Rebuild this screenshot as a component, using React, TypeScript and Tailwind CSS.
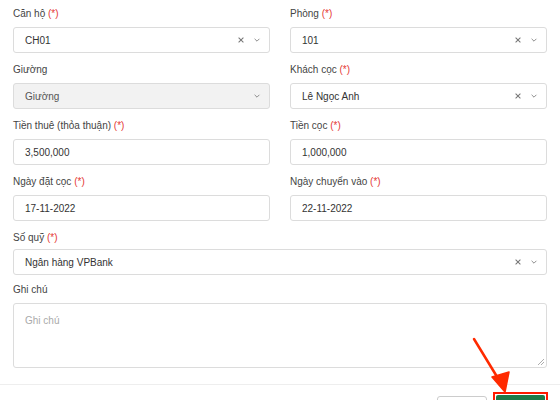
import React from 'react';

// ô chọn có nút xóa và mũi tên
function SelectBox({ value, clearable = true, disabled = false }: { value: string; clearable?: boolean; disabled?: boolean }) {
  return (
    <div
      className={`flex h-[26px] items-center rounded-[3px] border border-[#dcdcdc] pl-[11px] pr-[8px] ${
        disabled ? 'bg-[#f2f2f2] text-[#555]' : 'bg-white text-[#333]'
      }`}
    >
      <span className="flex-1">{value}</span>
      {clearable && (
        <svg className="mr-[8px] h-[8px] w-[8px] text-[#777]" viewBox="0 0 10 10" fill="none" stroke="currentColor" strokeWidth="1.3">
          <path d="M2 2l6 6M8 2l-6 6" />
        </svg>
      )}
      <svg className="h-[8px] w-[8px] text-[#888]" viewBox="0 0 10 10" fill="none" stroke="currentColor" strokeWidth="1.2">
        <path d="M2 3.5l3 3 3-3" />
      </svg>
    </div>
  );
}

function TextBox({ value }: { value: string }) {
  return (
    <div className="flex h-[26px] items-center rounded-[3px] border border-[#dcdcdc] bg-white pl-[11px] text-[#333]">
      {value}
    </div>
  );
}

function Field({ label, required, children, tight }: { label: string; required?: boolean; children: React.ReactNode; tight?: boolean }) {
  return (
    <div className={tight ? 'mb-[7px]' : 'mb-[9px]'}>
      <div className={`${tight ? 'mb-[3px]' : 'mb-[5px]'} h-[16px] leading-[16px] text-[#444]`}>
        {label} {required && <span className="text-[#e53935]">(*)</span>}
      </div>
      {children}
    </div>
  );
}

export default function App() {
  return (
    <div className="relative h-[400px] w-[560px] overflow-hidden bg-white text-[10px]" style={{ fontFamily: '"Liberation Sans", Arial, sans-serif' }}>
      <div className="px-[13px] pt-[6px]">
        <div className="grid grid-cols-2 gap-x-[20px]">
          <Field label="Căn hộ" required>
            <SelectBox value="CH01" />
          </Field>
          <Field label="Phòng" required>
            <SelectBox value="101" />
          </Field>
          <Field label="Giường">
            <SelectBox value="Giường" clearable={false} disabled />
          </Field>
          <Field label="Khách cọc" required>
            <SelectBox value="Lê Ngọc Anh" />
          </Field>
          <Field label="Tiền thuê (thỏa thuận)" required>
            <TextBox value="3,500,000" />
          </Field>
          <Field label="Tiền cọc" required>
            <TextBox value="1,000,000" />
          </Field>
          <Field label="Ngày đặt cọc" required>
            <TextBox value="17-11-2022" />
          </Field>
          <Field label="Ngày chuyển vào" required>
            <TextBox value="22-11-2022" />
          </Field>
        </div>
        <Field label="Số quỹ" required tight>
          <SelectBox value="Ngân hàng VPBank" />
        </Field>
        <div>
          <div className="mb-[5px] h-[16px] leading-[16px] text-[#444]">Ghi chú</div>
          <div className="relative h-[65px] rounded-[3px] border border-[#dcdcdc] bg-white px-[11px] pt-[9px] text-[#aaa]">
            Ghi chú
            <svg className="absolute bottom-[2px] right-[2px] h-[6px] w-[6px] text-[#999]" viewBox="0 0 6 6" stroke="currentColor" strokeWidth="0.8">
              <path d="M6 0L0 6M6 3L3 6" />
            </svg>
          </div>
        </div>
      </div>

      <div className="mt-[16px] border-t border-[#eeeeee]" />

      <div className="flex justify-end pr-[12px] pt-[7px]">
        <div className="mt-[4px] mr-[6px] h-[24px] w-[50px] rounded-[3px] border border-[#ccc] bg-white" />
        <div className="h-[30px] w-[55px] border-2 border-[#ff1a00] p-[1px]">
          <div className="h-full rounded-[2px] bg-[#1f7a48]" />
        </div>
      </div>

      {/* mũi tên đỏ chỉ vào nút lưu */}
      <svg className="absolute left-0 top-0" width="560" height="400" viewBox="0 0 560 400" fill="none">
        <path d="M474 339L499 380" stroke="#ff2a00" strokeWidth="2.5" strokeLinecap="round" />
        <path d="M492 377L505 392L509 372Z" fill="#ff2a00" stroke="#ff2a00" strokeWidth="1.5" strokeLinejoin="round" />
      </svg>
    </div>
  );
}
